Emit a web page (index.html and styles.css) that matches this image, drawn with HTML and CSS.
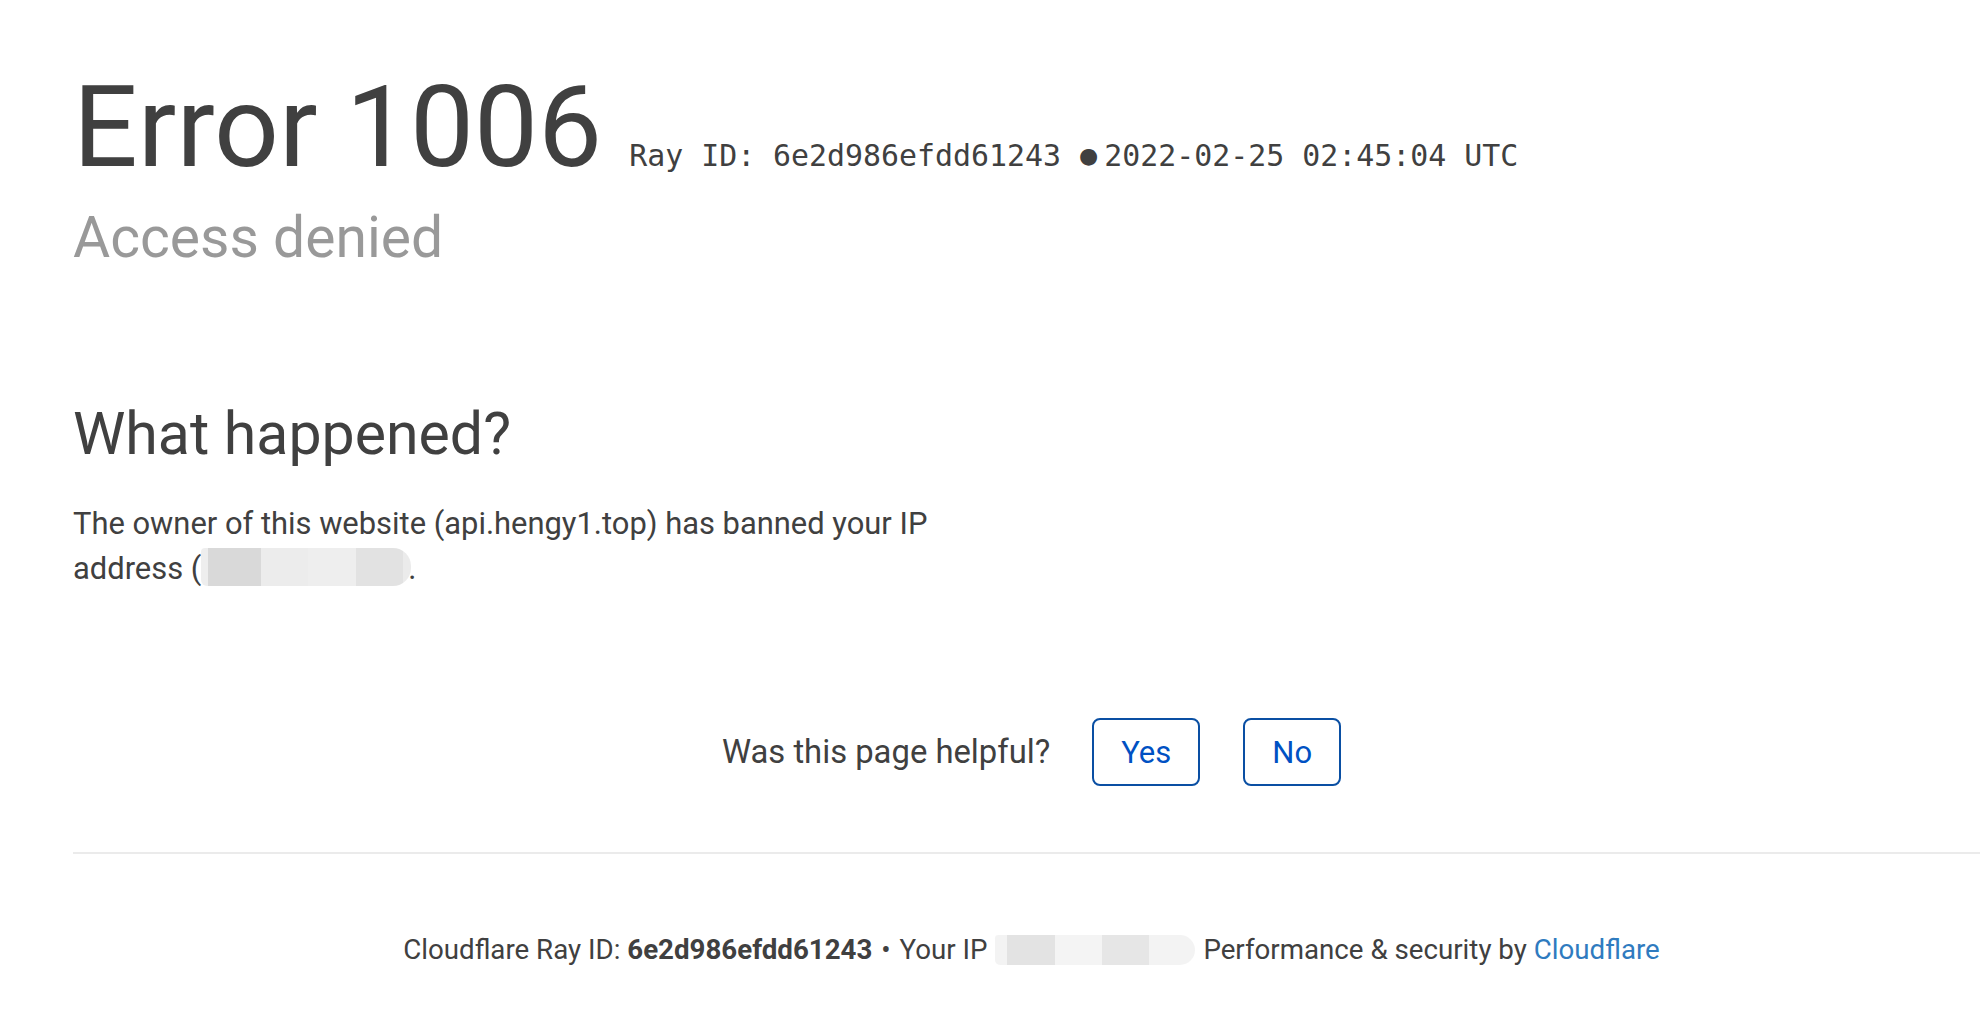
FILE: index.html
```html
<!DOCTYPE html>
<html lang="en">
<head>
<meta charset="utf-8">
<title>Access denied | api.hengy1.top used Cloudflare to restrict access</title>
<link rel="stylesheet" href="styles.css">
</head>
<body>
<div class="wrapper">
  <header class="header">
    <div class="title-row">
      <h1 class="title">Error 1006</h1>
      <span class="ray">Ray ID: 6e2d986efdd61243 <span class="dot">&#9679;</span>2022-02-25 02:45:04 UTC</span>
    </div>
    <h2 class="subtitle">Access denied</h2>
  </header>

  <section class="section">
    <h2 class="section-title">What happened?</h2>
    <p class="text">The owner of this website (api.hengy1.top) has banned your IP<br>address (<span class="blur blur-ip"></span>.</p>
  </section>

  <div class="feedback">
    <span class="feedback-q">Was this page helpful?</span>
    <button class="btn">Yes</button>
    <button class="btn">No</button>
  </div>

  <hr class="rule">

  <footer class="footer">Cloudflare Ray ID: <strong class="strong">6e2d986efdd61243</strong> <span class="sep">&bull;</span> Your IP<span class="blur blur-foot"></span> Performance &amp; security by <a class="link" href="#">Cloudflare</a></footer>
</div>
</body>
</html>
```

FILE: styles.css
```css
html, body {
  margin: 0;
  padding: 0;
  background: #ffffff;
  overflow: hidden;
}

body {
  font-family: Roboto, "Liberation Sans", Arial, sans-serif;
  color: #404040;
}

.wrapper {
  margin-left: 73px;
  width: 1917px;
}

.header {
  padding-top: 67px;
}

.title-row {
  display: flex;
  align-items: baseline;
  gap: 27px;
}

.title {
  margin: 0;
  font-size: 114px;
  line-height: 120px;
  font-weight: 400;
  color: #404040;
}

.ray {
  font-family: "DejaVu Sans Mono", "Liberation Mono", monospace;
  font-size: 29.9px;
  color: #404040;
}

.dot {
  font-family: "DejaVu Sans", sans-serif;
  font-size: 22px;
  margin-right: 6px;
  position: relative;
  top: -3px;
}

.subtitle {
  margin: 17px 0 0 0;
  font-size: 57px;
  line-height: 68px;
  font-weight: 400;
  color: #999999;
}

.section {
  margin-top: 127px;
}

.section-title {
  margin: 0;
  font-size: 59px;
  line-height: 70px;
  font-weight: 400;
  color: #404040;
}

.text {
  margin: 32px 0 0 0;
  font-size: 30.9px;
  line-height: 45px;
  color: #404040;
}

.blur {
  display: inline-block;
  border-radius: 4px 18px 18px 6px;
}

.blur-ip {
  width: 210px;
  height: 38px;
  vertical-align: -7px;
  margin-right: -3px;
  background: linear-gradient(to right,
    #eeeeee 0, #eeeeee 7px,
    #d9d9d9 7px, #d9d9d9 60px,
    #ececec 60px, #ececec 107px,
    #eeeeee 107px, #eeeeee 155px,
    #e2e2e2 155px, #e2e2e2 202px,
    #ebebeb 202px);
}

.blur-foot {
  width: 200px;
  height: 30px;
  margin-left: 7px;
  margin-right: 2px;
  vertical-align: -6px;
  background: linear-gradient(to right,
    #f3f3f3 0, #f3f3f3 12px,
    #e3e3e3 12px, #e3e3e3 60px,
    #f4f4f4 60px, #f4f4f4 107px,
    #e6e6e6 107px, #e6e6e6 154px,
    #f3f3f3 154px);
}

.feedback {
  margin-top: 127px;
  display: flex;
  align-items: center;
  justify-content: center;
}

.feedback-q {
  font-size: 32.8px;
  line-height: 45px;
  color: #404040;
  margin-right: 42px;
}

.btn {
  font-family: Roboto, "Liberation Sans", Arial, sans-serif;
  font-size: 31px;
  height: 68px;
  padding: 0 27px;
  border: 2.5px solid #0a4fa3;
  border-radius: 8px;
  background: #ffffff;
  color: #0051c3;
  margin-right: 43px;
}

.btn:last-child {
  margin-right: 0;
}

.rule {
  margin: 66px 0 0 0;
  border: 0;
  border-top: 2px solid #ebebeb;
  height: 0;
}

.footer {
  margin-top: 76px;
  text-align: center;
  font-size: 27.7px;
  line-height: 40px;
  color: #404040;
}

.strong {
  font-weight: 700;
}

.sep {
  margin: 0 2px;
}

.link {
  color: #2f7bbf;
  text-decoration: none;
}
```
